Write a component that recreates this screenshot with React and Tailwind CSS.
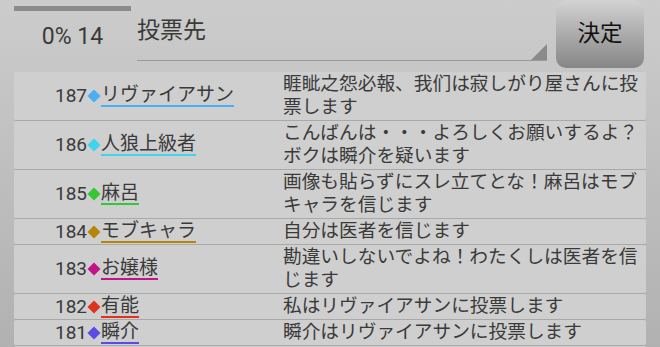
const rows = [
  { no: 187, name: "リヴァイアサン", color: "#4aaef2", msg: "睚眦之怨必報、我们は寂しがり屋さんに投票します" },
  { no: 186, name: "人狼上級者", color: "#3fd3ec", msg: "こんばんは・・・よろしくお願いするよ？ボクは瞬介を疑います" },
  { no: 185, name: "麻呂", color: "#34c834", msg: "画像も貼らずにスレ立てとな！麻呂はモブキャラを信じます" },
  { no: 184, name: "モブキャラ", color: "#b4860b", msg: "自分は医者を信じます" },
  { no: 183, name: "お嬢様", color: "#c4138a", msg: "勘違いしないでよね！わたくしは医者を信じます" },
  { no: 182, name: "有能", color: "#e0331f", msg: "私はリヴァイアサンに投票します" },
  { no: 181, name: "瞬介", color: "#5a4ce2", msg: "瞬介はリヴァイアサンに投票します" },
];

function Diamond({ color }) {
  return (
    <svg width="14" height="14" viewBox="0 0 14 14" className="shrink-0">
      <polygon points="7,0.5 13.5,7 7,13.5 0.5,7" fill={color} />
    </svg>
  );
}

function Row({ row }) {
  return (
    <div className="flex rounded-[2px] border-b border-[#a9a9a9] bg-[#cfcfcf] py-[1px]">
      <div className="flex w-[269px] shrink-0 items-center pl-[41px] text-[19px] leading-[20px]">
        <span>{row.no}</span>
        <Diamond color={row.color} />
        <span className="border-b-2" style={{ borderColor: row.color }}>
          {row.name}
        </span>
      </div>
      <div className="w-[363px] pr-[4px] text-[18.7px] leading-[23px]">{row.msg}</div>
    </div>
  );
}

export default function App() {
  return (
    <div className="h-[347px] w-[660px] overflow-hidden bg-gradient-to-b from-[#cccccc] to-[#b1b1b1] font-['Roboto','Noto_Sans_CJK_JP',sans-serif] text-[#3a3a3a]">
      <div className="flex h-[72px] pl-[14px]">
        <div className="w-[117px]">
          <div className="mt-[6px] h-[5px] bg-[#8b8b8b]" />
          <div className="mt-[14px] text-center text-[23px] leading-[23px]">0% 14</div>
        </div>
        <div className="relative ml-[6px] h-[61px] w-[410px] border-b border-[#9a9a9a]">
          <div className="pt-[18px] text-[23px] leading-[26px]">投票先</div>
          <svg width="16" height="16" viewBox="0 0 16 16" className="absolute right-0 bottom-0">
            <polygon points="16,0 16,16 0,16" fill="#8a8a8a" />
          </svg>
        </div>
        <button className="ml-[9px] flex h-[68px] w-[88px] items-center justify-center rounded-[10px] bg-gradient-to-b from-[#d3d3d3] to-[#868686] text-[22.5px] text-[#111]">
          決定
        </button>
      </div>
      <div className="mx-[14px] flex flex-col">
        {rows.map((r) => (
          <Row key={r.no} row={r} />
        ))}
        {/* next row, scrolled out of view */}
        <div className="h-[26px] rounded-[2px] bg-[#cfcfcf]" />
      </div>
    </div>
  );
}
